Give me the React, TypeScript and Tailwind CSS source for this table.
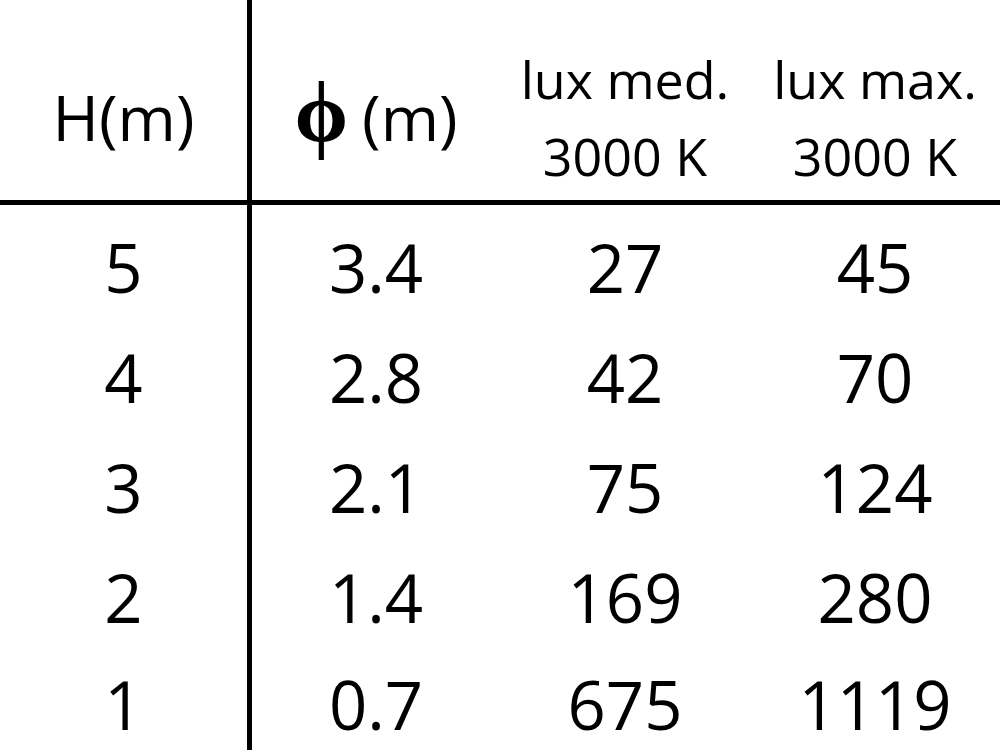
import React from 'react';

const ROWS = [
  ['5', '3.4', '27', '45'],
  ['4', '2.8', '42', '70'],
  ['3', '2.1', '75', '124'],
  ['2', '1.4', '169', '280'],
  ['1', '0.7', '675', '1119'],
];

export default function App() {
  return (
    <div className="w-[1000px] h-[750px] overflow-hidden bg-white text-black font-['Open_Sans',sans-serif]">
      {/* Header */}
      <div className="grid grid-cols-[252px_248px_250px_250px] h-[205px] border-b-[5px] border-black">
        <div className="flex items-center justify-center pt-[34px] border-r-[5px] border-black text-[63px]">
          H(m)
        </div>
        <div className="flex items-center justify-center pt-[34px] text-[63px]">
          <span className="font-['Liberation_Serif',serif] font-bold text-[86px] leading-none mr-[14px] mb-[10px]">ϕ</span>
          <span>(m)</span>
        </div>
        <div className="flex flex-col items-center justify-center pt-[34px] text-[52px] leading-[77px]">
          <span>lux med.</span>
          <span>3000 K</span>
        </div>
        <div className="flex flex-col items-center justify-center pt-[34px] text-[52px] leading-[77px]">
          <span>lux max.</span>
          <span>3000 K</span>
        </div>
      </div>

      {/* Data rows */}
      {ROWS.map((row, i) => (
        <div
          key={i}
          className={`grid grid-cols-[252px_248px_250px_250px] text-[67px] leading-[80px] ${i === 0 ? 'h-[117px]' : i === ROWS.length - 1 ? 'h-[98px]' : 'h-[110px]'}`}
        >
          {row.map((cell, j) => (
            <div
              key={j}
              className={`flex justify-center ${i === 0 ? 'pt-[22px]' : i === ROWS.length - 1 ? 'pt-[12px]' : 'pt-[15px]'} ${j === 0 ? 'border-r-[5px] border-black' : ''}`}
            >
              {cell}
            </div>
          ))}
        </div>
      ))}
    </div>
  );
}
